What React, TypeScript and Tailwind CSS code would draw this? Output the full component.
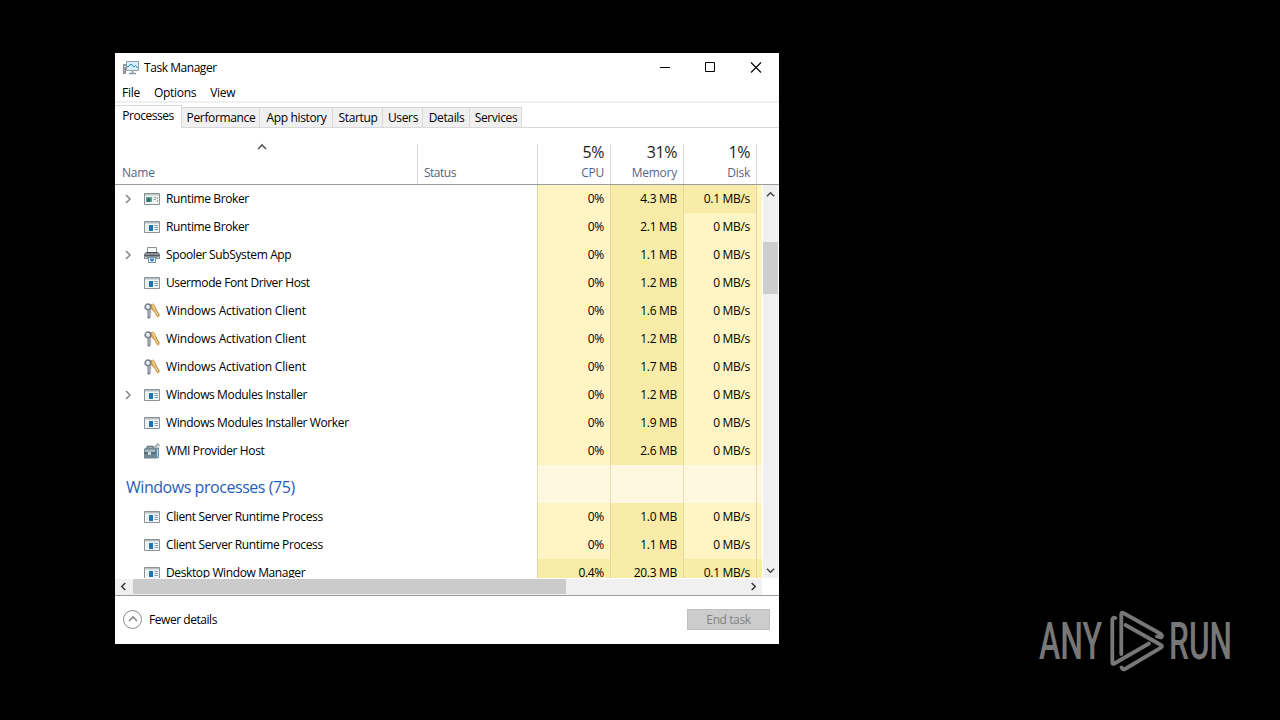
import type { ReactNode } from 'react';

type IconName = 'app' | 'broker' | 'printer' | 'keys' | 'toolbox';

interface ProcessRow {
  name: string;
  icon: IconName;
  expandable?: boolean;
  cpu: string;
  memory: string;
  disk: string;
}

const backgroundProcesses: ProcessRow[] = [
  { name: 'Runtime Broker', icon: 'broker', expandable: true, cpu: '0%', memory: '4.3 MB', disk: '0.1 MB/s' },
  { name: 'Runtime Broker', icon: 'app', cpu: '0%', memory: '2.1 MB', disk: '0 MB/s' },
  { name: 'Spooler SubSystem App', icon: 'printer', expandable: true, cpu: '0%', memory: '1.1 MB', disk: '0 MB/s' },
  { name: 'Usermode Font Driver Host', icon: 'app', cpu: '0%', memory: '1.2 MB', disk: '0 MB/s' },
  { name: 'Windows Activation Client', icon: 'keys', cpu: '0%', memory: '1.6 MB', disk: '0 MB/s' },
  { name: 'Windows Activation Client', icon: 'keys', cpu: '0%', memory: '1.2 MB', disk: '0 MB/s' },
  { name: 'Windows Activation Client', icon: 'keys', cpu: '0%', memory: '1.7 MB', disk: '0 MB/s' },
  { name: 'Windows Modules Installer', icon: 'app', expandable: true, cpu: '0%', memory: '1.2 MB', disk: '0 MB/s' },
  { name: 'Windows Modules Installer Worker', icon: 'app', cpu: '0%', memory: '1.9 MB', disk: '0 MB/s' },
  { name: 'WMI Provider Host', icon: 'toolbox', cpu: '0%', memory: '2.6 MB', disk: '0 MB/s' },
];

const windowsProcesses: ProcessRow[] = [
  { name: 'Client Server Runtime Process', icon: 'app', cpu: '0%', memory: '1.0 MB', disk: '0 MB/s' },
  { name: 'Client Server Runtime Process', icon: 'app', cpu: '0%', memory: '1.1 MB', disk: '0 MB/s' },
  { name: 'Desktop Window Manager', icon: 'app', cpu: '0.4%', memory: '20.3 MB', disk: '0.1 MB/s' },
];

const tabs = [
  { label: 'Performance', width: 'w-[78px]' },
  { label: 'App history', width: 'w-[73px]' },
  { label: 'Startup', width: 'w-[50px]' },
  { label: 'Users', width: 'w-[40px]' },
  { label: 'Details', width: 'w-[47px]' },
  { label: 'Services', width: 'w-[52px]' },
];

const usage = [
  { total: '5%', label: 'CPU' },
  { total: '31%', label: 'Memory' },
  { total: '1%', label: 'Disk' },
];

function Chevron({ className, d }: { className: string; d: string }) {
  return (
    <svg className={className} viewBox="0 0 10 10" fill="none" stroke="currentColor" strokeWidth="1.6">
      <path d={d} />
    </svg>
  );
}

const UP = 'M1 7l4-4 4 4';
const DOWN = 'M1 3l4 4 4-4';
const LEFT = 'M7 1L3 5l4 4';
const RIGHT = 'M3 1l4 4-4 4';

function ProcessIcon({ name }: { name: IconName }) {
  const shapes: Record<IconName, ReactNode> = {
    app: (
      <>
        <path d="M.5 2.5h15v11H.5z" fill="#f4f6f7" stroke="#8b9298" />
        <path d="M1 3h14v1.500H1z" fill="#b9c0c5" />
        <path d="M5 6h4v6H5z" fill="#1976b8" />
        <path d="M2 6.500h2M2 8.500h2M2 10.500h2" stroke="#dfe8ee" />
        <path d="M10.500 6.500H14M10.500 8.500H14M10.500 10.500H14" stroke="#7d9db5" />
      </>
    ),
    broker: (
      <>
        <path d="M.5 2.500h15v11H.5z" fill="#f1f4f3" stroke="#87918f" />
        <path d="M1 3h14v1.500H1z" fill="#bccac9" />
        <path d="M2 6h6v5H2z" fill="#5ba68f" />
        <path d="M3 8l2-1 2 2-2 2H3z" fill="#2f6b70" />
        <path d="M9.500 6.500H12M9.500 8.500H12M13.500 6v2M13.500 9v2" stroke="#9aa9a7" />
      </>
    ),
    printer: (
      <>
        <path d="M3.500.5h9V6h-9z" fill="#f8f9fa" stroke="#8c9298" />
        <path d="M1.500 5h13L16 7v5H0V7z" fill="#898e93" />
        <path d="M3 5.500h10" stroke="#45494d" />
        <path d="M0 8.500h16" stroke="#5a5e62" />
        <path d="M1 10.500h2M13 10.500h2" stroke="#c9cdd0" />
        <path d="M4.500 10.500h7v5h-7z" fill="#e6f1fa" stroke="#7596b0" />
        <path d="M6 11.500h4v2H9v1H7v-1H6z" fill="#3d87c6" />
      </>
    ),
    keys: (
      <>
        <path d="M6 1.500L9 .5l2.500 2.500L12 6l3.500 6-.5 2.500-2-.5-3-5-3-3z" fill="#d9a650" />
        <path d="M8.500 2l5.500 10" stroke="#f5d999" strokeWidth="1.300" />
        <path d="M11.500 5l1.500 3.500 2.500 3.500" stroke="#9e7631" fill="none" strokeWidth=".8" />
        <circle cx="4" cy="4" r="2.800" fill="#e5e8ee" stroke="#7b8290" strokeWidth="1.800" />
        <circle cx="3.500" cy="3" r="1" fill="#fff" />
        <path d="M3.500 7h3v7L5 16l-1.500-1.500z" fill="#6d7583" />
        <path d="M5 7v7M6.500 9.500H8M6.500 12h1" stroke="#c9ced7" />
      </>
    ),
    toolbox: (
      <>
        <path d="M3.500 6V3.500H9V6" stroke="#6a7880" strokeWidth="1.500" fill="none" />
        <path d="M0 6l2-1.500h13V14l-3 1.500H0z" fill="#70878f" />
        <path d="M1 6.500h10v2.500H1z" fill="#a5b9c1" />
        <path d="M0 10h12" stroke="#3d535e" />
        <path d="M4 9h3v3H4z" fill="#d0dade" />
        <path d="M10 5l4-4M13 .5l2.500 2.500" stroke="#a6adb1" strokeWidth="1.800" />
        <path d="M12 6h3v8l-1.500 1.500L12 14z" fill="#5d92b5" />
        <path d="M13.500 6v8" stroke="#b5d8ea" />
      </>
    ),
  };

  return (
    <svg className="h-4 w-4 shrink-0" viewBox="0 0 16 16">
      {shapes[name]}
    </svg>
  );
}

function Cell({ value, hot }: { value: string; hot?: boolean }) {
  return (
    <div
      className={`w-[73px] shrink-0 border-l border-[#e3d698] pr-[6px] text-right tracking-[-0.3px] ${
        hot ? 'bg-[#f9eca8]' : 'bg-[#fff4c4]'
      }`}
    >
      {value}
    </div>
  );
}

function Row({ row }: { row: ProcessRow }) {
  return (
    <div className="flex h-7 shrink-0 leading-[28px]">
      <div className="flex w-[422px] shrink-0 items-center">
        <div className="flex w-[29px] shrink-0 pl-[8px] text-[#8a8a8a]">
          {row.expandable && <Chevron className="h-[10px] w-[10px]" d={RIGHT} />}
        </div>
        <ProcessIcon name={row.icon} />
        <span
          className={`ml-[6px] h-7 whitespace-nowrap ${
            row.icon === 'keys' ? 'tracking-[-0.19px]' : 'tracking-[-0.38px]'
          }`}
        >
          {row.name}
        </span>
      </div>
      <Cell value={row.cpu} hot={row.cpu !== '0%'} />
      <Cell value={row.memory} hot />
      <Cell value={row.disk} hot={row.disk !== '0 MB/s'} />
      <div className={`flex-1 border-l border-[#e3d698] ${row.cpu !== '0%' ? 'bg-[#f9eca8]' : 'bg-[#fff4c4]'}`} />
    </div>
  );
}

function TitleBar() {
  return (
    <div className="flex h-[30px] shrink-0 items-center pl-[8px]">
      <svg className="h-4 w-4" viewBox="0 0 16 16" fill="none">
        <path d="M.5 4.500h2v9h-2z" fill="#a4a9ae" stroke="#858b91" />
        <path d="M1 6.500h2" stroke="#e0e3e5" />
        <path d="M3.500 1.500h12v9h-12z" fill="#d7effc" stroke="#959fa8" />
        <path d="M4 7l2-1 2-2 3 3 1.500-1.500L15 8" stroke="#2388bd" />
        <path d="M9.500 11v2M6 13.500h7" stroke="#8c969e" strokeWidth="1.500" />
      </svg>
      <span className="ml-[5px] flex-1 tracking-[-0.45px]">Task Manager</span>
      <svg className="mr-[17px] mb-[2px] h-[11px] w-[102px] text-black" viewBox="0 0 102 11" fill="none" stroke="currentColor">
        <path d="M0 5.500h10" />
        <path d="M45.500.5h9v9h-9z" />
        <path d="M91 .5l10 10M101 .5l-10 10" strokeWidth="1.100" />
      </svg>
    </div>
  );
}

function ProcessTable() {
  return (
    <>
      <div className="flex h-[57px] shrink-0 border-b border-[#9c9c9c] pt-4 text-[#56657f]">
        <div className="flex w-[303px] shrink-0 flex-col border-r border-[#d9d9d9] pl-[7px]">
          <Chevron className="ml-[135px] h-[10px] w-[10px] shrink-0 -translate-y-[2px] text-[#555]" d={UP} />
          <span className="mt-[10px] leading-[18px] tracking-[-0.2px]">Name</span>
        </div>
        <div className="w-[119px] shrink-0 pt-[20px] pl-[6px] leading-[18px] tracking-[-0.5px]">Status</div>
        {usage.map((column) => (
          <div key={column.label} className="w-[73px] shrink-0 border-l border-[#d9d9d9] pr-[6px] text-right">
            <div className="h-5 text-[16px] leading-[17px] tracking-[-0.4px] text-[#1c1c1c]">{column.total}</div>
            <div className="leading-[18px] tracking-[-0.25px]">{column.label}</div>
          </div>
        ))}
        <div className="flex-1 border-l border-[#d9d9d9]" />
      </div>

      <div className="flex h-[394px] shrink-0">
        <div className="flex h-[393px] w-[647px] shrink-0 flex-col overflow-hidden">
          {backgroundProcesses.map((row, i) => (
            <Row key={i} row={row} />
          ))}
          <div className="flex h-[38px] shrink-0">
            <div className="w-[422px] shrink-0 pt-[10px] pl-[11px] text-[16px] leading-[24px] tracking-[-0.45px] text-[#2a5db8]">
              Windows processes (75)
            </div>
            <div className="w-[73px] shrink-0 border-l border-[#e8ddb0] bg-[#fff8e1]" />
            <div className="w-[73px] shrink-0 border-l border-[#e8ddb0] bg-[#fff8e1]" />
            <div className="w-[73px] shrink-0 border-l border-[#e8ddb0] bg-[#fff8e1]" />
            <div className="flex-1 border-l border-[#e8ddb0] bg-[#fff8e1]" />
          </div>
          {windowsProcesses.map((row, i) => (
            <Row key={i} row={row} />
          ))}
        </div>
        <div className="ml-px flex h-[393px] w-[15px] flex-col items-center bg-[#f0f0f0] text-[#444]">
          <Chevron className="mt-[5px] h-[9px] w-[9px] shrink-0" d={UP} />
          <div className="mt-[43px] h-[52px] w-full shrink-0 bg-[#cdcdcd]" />
          <Chevron className="mt-auto mb-[3px] h-[9px] w-[9px] shrink-0" d={DOWN} />
        </div>
      </div>

      <div className="flex h-[16px] w-[647px] shrink-0 items-center bg-[#f0f0f0] text-[#333]">
        <Chevron className="mb-px ml-[4px] h-[9px] w-[9px] shrink-0" d={LEFT} />
        <div className="ml-[5px] h-[15px] w-[433px] shrink-0 self-start bg-[#cbcbcb]" />
        <Chevron className="mr-[4px] mb-px ml-auto h-[9px] w-[9px] shrink-0" d={RIGHT} />
      </div>
    </>
  );
}

function Watermark() {
  return (
    <svg className="absolute top-[605px] left-[1035px] h-[70px] w-[200px]" viewBox="0 0 200 70" fill="none">
      <g fill="#777" fontFamily="Roboto" fontSize="52" fontWeight="500">
        <text x="4" y="54" textLength="63" lengthAdjust="spacingAndGlyphs">ANY</text>
        <text x="134" y="54" textLength="63" lengthAdjust="spacingAndGlyphs">RUN</text>
      </g>
      <g stroke="#777" strokeWidth="3.800" strokeLinecap="round" strokeLinejoin="round">
        <path d="M86.300 49V9q0-2 2-1L126 29q2 2 0 3.500l-4-1" />
        <path d="M90.500 20L126 40q2 1.300 0 2.600L90 64q-2 1-3.500-1.500" />
        <path d="M80.300 13q-3-1-3 2v42.500q0 2 2 1L114 38.500" />
      </g>
    </svg>
  );
}

export default function App() {
  return (
    <div className="relative h-[720px] w-[1280px] overflow-hidden bg-black pt-[53px] pl-[115px] font-['Open_Sans','Noto_Sans',sans-serif] text-[12px] text-black">
      <div className="flex h-[591px] w-[664px] flex-col bg-white">
        <TitleBar />
        <div className="flex h-[20px] shrink-0 gap-[14px] border-b-2 border-[#f0f0f0] pl-[7px] leading-[19px]">
          <span className="tracking-[-0.25px]">File</span>
          <span className="tracking-[-0.3px]">Options</span>
          <span className="tracking-[-0.25px]">View</span>
        </div>

        <div className="flex h-[25px] shrink-0 pt-[2px]">
          <div className="w-[67px] border-t border-r border-[#d9d9d9] text-center leading-[20px] tracking-[-0.45px]">
            Processes
          </div>
          <div className="flex flex-1 border-b border-[#d9d9d9] pt-[2px]">
            {tabs.map((tab) => (
              <div
                key={tab.label}
                className={`${tab.width} shrink-0 border-t border-r border-[#d9d9d9] bg-[#f0f0f0] pl-px text-center leading-[20px] tracking-[-0.35px] whitespace-nowrap`}
              >
                {tab.label}
              </div>
            ))}
          </div>
        </div>

        <ProcessTable />

        <div className="flex flex-1 items-center border-t border-[#9c9c9c] pl-[8px]">
          <div className="mb-[2px] flex h-[19px] w-[19px] items-center justify-center rounded-full border border-[#8c8c8c] text-[#888]">
            <Chevron className="h-[10px] w-[10px]" d={UP} />
          </div>
          <span className="ml-[7px] tracking-[-0.45px]">Fewer details</span>
          <div className="mr-[9px] mb-[2px] ml-auto h-[21px] w-[83px] border border-[#bfbfbf] bg-[#ccc] text-center leading-[19px] tracking-[-0.4px] text-[#838383]">
            End task
          </div>
        </div>
      </div>
      <Watermark />
    </div>
  );
}
